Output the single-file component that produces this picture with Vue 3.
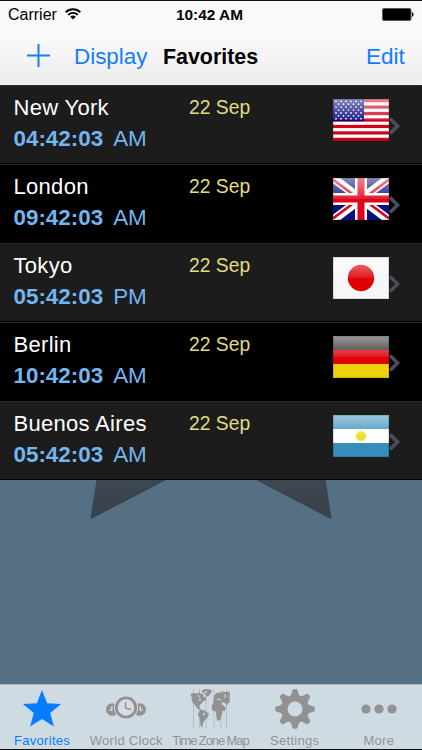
<template>
    <div class="phone">
        <header class="top">
            <div class="status">
                <span class="carrier">Carrier</span>
                <svg class="wifi" width="16" height="12" viewBox="0 0 16 12">
                    <path d="M.7 4.2a10.5 10.5 0 0 1 14.6 0M3.2 6.9a6.8 6.8 0 0 1 9.6 0" fill="none" stroke="#000" stroke-width="1.9" />
                    <path d="M8 11.6 5.2 8.8a4 4 0 0 1 5.6 0z" />
                </svg>
                <span class="clock">10:42 AM</span>
                <svg class="battery" width="32" height="13" viewBox="0 0 32 13">
                    <rect x=".5" y=".5" width="28.5" height="12" rx="1.5" stroke="#555" />
                    <path d="M30 4.2c2.1.6 2.1 4 0 4.6z" />
                </svg>
            </div>
            <nav class="navbar">
                <svg class="plus" width="23" height="23" viewBox="0 0 23 23">
                    <path d="M11.5 0v23M0 11.5h23" stroke="#147efb" stroke-width="2" />
                </svg>
                <a class="display">Display</a>
                <h1>Favorites</h1>
                <a class="edit">Edit</a>
            </nav>
        </header>

        <main class="content">
            <svg class="big-star" width="422" height="60" viewBox="0 480 422 60">
                <defs>
                    <linearGradient id="starFill" x1="0" y1="0" x2="0" y2="1">
                        <stop offset="0" stop-color="#3e4851" />
                        <stop offset="1" stop-color="#394149" />
                    </linearGradient>
                </defs>
                <path d="M97 480 91 518.500 165 480zM257 480l74 38.500-6-38.500z" fill="url(#starFill)" stroke="#35434f" stroke-width="1" />
            </svg>
            <ul class="list">
                <li v-for="city in cities" :key="city.name" class="row">
                    <div class="info">
                        <div class="name">{{ city.name }}</div>
                        <div class="time"><b>{{ city.time }}</b><span>{{ city.half }}</span></div>
                    </div>
                    <div class="date">22 Sep</div>
                    <svg class="flag" width="56" height="42" viewBox="0 0 56 42">
                        <defs>
                            <linearGradient :id="'gloss-' + city.flag" x1="0" y1="0" x2="0" y2="1">
                                <stop offset="0" stop-color="#fff" stop-opacity=".52" />
                                <stop offset="1" stop-color="#fff" stop-opacity=".1" />
                            </linearGradient>
                        </defs>
                        <g v-if="city.flag === 'us'">
                            <rect width="56" height="42" fill="#fff" />
                            <rect v-for="n in 7" :key="n" :y="(n - 1) * 6.46" width="56" height="3.23" fill="#d3001c" />
                            <rect width="31" height="22.2" fill="#08087c" />
                            <template v-for="r in 7" :key="r">
                                <circle v-for="c in (r % 2 ? 6 : 5)" :key="c" :cx="c * 5 - (r % 2 ? 2 : -.5)" :cy="r * 2.9 - .6" r=".85" fill="#fff" />
                            </template>
                        </g>
                        <g v-else-if="city.flag === 'gb'">
                            <rect width="56" height="42" fill="#07127b" />
                            <path d="m0 0 56 42M56 0 0 42" stroke="#fff" stroke-width="8.500" />
                            <path d="M0 1.500 22 18M34 24l22 16.500M56 1.500 34 18M22 24 0 40.500" stroke="#d80d22" stroke-width="2.800" />
                            <path d="M28 0v42M0 21h56" stroke="#fff" stroke-width="12" />
                            <path d="M28 0v42M0 21h56" stroke="#e0041a" stroke-width="7" />
                        </g>
                        <g v-else-if="city.flag === 'jp'">
                            <rect width="56" height="42" fill="#f6f6f6" />
                            <circle cx="28" cy="21" r="13.200" fill="#df0005" />
                        </g>
                        <g v-else-if="city.flag === 'de'">
                            <rect width="56" height="14" fill="#2b2b2b" />
                            <rect y="14" width="56" height="14" fill="#e00008" />
                            <rect y="28" width="56" height="14" fill="#efd00a" />
                        </g>
                        <g v-else>
                            <rect width="56" height="42" fill="#358fba" />
                            <rect y="14" width="56" height="14" fill="#fff" />
                            <circle cx="28" cy="21" r="5.800" fill="#f6ed9a" />
                            <circle cx="28" cy="21" r="4.600" fill="#efdc28" />
                        </g>
                        <rect width="56" height="21" :fill="`url(#gloss-${city.flag})`" />
                        <rect x=".5" y=".5" width="55" height="41" fill="none" stroke="#000" stroke-opacity=".13" />
                    </svg>
                    <svg class="chevron" width="12" height="18" viewBox="0 0 12 18">
                        <path d="m1 1.500 7.500 7.500-7.500 7.500" fill="none" stroke="#4a4d5a" stroke-width="3.600" />
                    </svg>
                </li>
            </ul>
        </main>

        <footer class="tabs">
            <div class="tab active">
                <svg width="40" height="40" viewBox="0 0 40 40">
                    <path d="m20 1 5.100 13.200 14 .8-10.900 8.900 3.700 13.700L20 30 8.100 37.600l3.700-13.700L.9 15l14-.8z" />
                </svg>
                <span>Favorites</span>
            </div>
            <div class="tab">
                <svg width="40" height="40" viewBox="0 0 40 40">
                    <circle cx="6.300" cy="20.500" r="6.300" />
                    <circle cx="33.700" cy="20.500" r="6.300" />
                    <circle cx="20" cy="18.500" r="12" fill="#cfdbe3" />
                    <circle cx="20" cy="18.500" r="9.700" fill="#d4dde3" stroke="#929292" stroke-width="2.800" />
                    <path d="M19.600 13v6.200l5.300 1.400" fill="none" stroke="#929292" stroke-width="1.500" />
                    <path d="M5.800 17v4.100H3.200M34.200 17v4.100h2.600" fill="none" stroke="#dbe4e9" stroke-width="1.300" />
                </svg>
                <span>World Clock</span>
            </div>
            <div class="tab map">
                <svg width="40" height="40" viewBox="0 0 40 40">
                    <path d="M3.500 0v39M9.500 0v39M16 0v39M24 0v39M31 0v39M36.500 0v39" stroke="#b3bdc4" stroke-width="1" />
                    <path d="m.5 5 3-1 3 .5 3-1 2.500 1.500 2 .2-1 2.300 2.500.5 1 3-3 1-2 2.500-2 1.500-.5 2 2 2.500 2 1.200-1.500.3-4-2.500-3-4-2.500-3-.3-4zM12 1.500l3-1.500 6 .5 1 2-3 4-2.500 1.500-2-4-2.500-.5zM10 21.500l3-.7 3 1.700 3 2.200-1.500 4-2.500 2-2 4-1 4-1.500-2-.7-7-2-4.500zM23.500 10l1-4 3-2.500 3 .5 2-1.500 3 .5 4.200-.5v11l-2 1-1.200 2.500-1.500-3-2-1-1.500 2 2 1.500 2.500 2.500-2 4-2 2-1.500 5-2.500 2.500-1.500-3-.5-7-3.500-1-1-4 2-4z" />
                    <path d="m8 6 2 3M27 10l4 1M35 5v4" stroke="#cfdbe3" stroke-width="1" />
                    <circle cx="16" cy="3" r=".9" fill="#e5edf1" />
                    <circle cx="10" cy="11" r=".9" fill="#e5edf1" />
                    <circle cx="14" cy="25" r=".9" fill="#e5edf1" />
                    <circle cx="33" cy="23" r=".9" fill="#e5edf1" />
                </svg>
                <span>Time Zone Map</span>
            </div>
            <div class="tab">
                <svg width="40" height="40" viewBox="0 0 40 40">
                    <g v-for="n in 8" :key="n" :transform="`rotate(${n * 45} 20 20)`">
                        <path d="M12 9.500q4.500-2 5.300-8Q17.600.2 19 .2h2q1.400 0 1.700 1.300.8 6 5.300 8z" />
                    </g>
                    <circle cx="20" cy="20" r="10.600" fill="none" stroke="#929292" stroke-width="6.400" />
                </svg>
                <span>Settings</span>
            </div>
            <div class="tab">
                <svg width="40" height="40" viewBox="0 0 40 40">
                    <circle cx="7" cy="20" r="4.600" />
                    <circle cx="20" cy="20" r="4.600" />
                    <circle cx="33" cy="20" r="4.600" />
                </svg>
                <span>More</span>
            </div>
        </footer>
    </div>
</template>

<script setup>
const cities = [
    { name: 'New York',     time: '04:42:03', half: 'AM', flag: 'us' },
    { name: 'London',       time: '09:42:03', half: 'AM', flag: 'gb' },
    { name: 'Tokyo',        time: '05:42:03', half: 'PM', flag: 'jp' },
    { name: 'Berlin',       time: '10:42:03', half: 'AM', flag: 'de' },
    { name: 'Buenos Aires', time: '05:42:03', half: 'AM', flag: 'ar' },
];
</script>

<style>
body { margin: 0; }
</style>

<style scoped>
.phone {
    width: 422px;
    height: 750px;
    box-sizing: border-box;
    display: flex;
    flex-direction: column;
    overflow: hidden;
    border-top: 1px solid #111;
    border-bottom: 1px solid #111;
    background: #557085;
    font-family: "Liberation Sans", Arial, sans-serif;
    white-space: nowrap;
}

svg { display: block; flex: none; }

.top {
    height: 84px;
    flex: none;
    background: linear-gradient(#f9f9f9 40%, #ededed);
}

.status {
    display: grid;
    grid-template-columns: 57px 108px 1fr 40px;
    align-items: center;
    height: 28px;
    font-size: 16px;
}
.carrier { padding-left: 8px; }
.wifi { margin: -2px 0 0 8px; }
.battery { margin-top: -1px; }
.clock { font-size: 15.4px; font-weight: bold; padding-left: 11px; }

.navbar {
    display: grid;
    grid-template-columns: 74px 89px 1fr 56px;
    align-items: center;
    height: 56px;
    line-height: 26px;
}
.plus { margin: -4px 0 0 26.5px; }
.navbar a { color: #147efb; }
.display { font-size: 22.4px; }
.edit { font-size: 22.5px; }
.navbar h1 { margin: 0; font-size: 21.4px; }

/* City list */
.content { position: relative; flex: 1; }
.big-star { position: absolute; left: 0; top: 395px; }
.list { margin: 0; padding: 0; list-style: none; }

.row {
    display: grid;
    grid-template-columns: 189px 144px 56px 1fr;
    align-items: start;
    height: 79px;
    box-sizing: border-box;
    background: #1c1c1c;
    border-top: 1px solid #2b2b2b;
    border-bottom: 1px solid #000;
}
.row:nth-child(even) { background: #000; }
.info { padding: 9px 0 0 13.5px; }
.name { color: #fff; font-size: 22px; line-height: 26px; letter-spacing: .3px; }
.time { color: #73b5f0; font-size: 22.4px; line-height: 26px; margin-top: 5px; }
.time span { margin-left: 10px; }
.date { color: #e0dc82; font-size: 19.3px; line-height: 26px; padding-top: 9px; }
.flag { margin-top: 13px; }
.chevron { margin-top: 31px; }

/* Bottom tabs */
.tabs {
    display: grid;
    grid-template-columns: repeat(5, 84.2px);
    height: 65px;
    flex: none;
    background: #cfdbe3;
    box-shadow: inset 0 1px #a9b7c1;
}
.tab {
    display: flex;
    flex-direction: column;
    align-items: center;
    padding-top: 5px;
    color: #929292;
    font-size: 13px;
    line-height: 16px;
    letter-spacing: .3px;
}
.tab svg { fill: currentColor; }
.tab span { margin-top: 4px; }
.active { color: #087cff; }
.map span { letter-spacing: -1.1px; }
</style>
